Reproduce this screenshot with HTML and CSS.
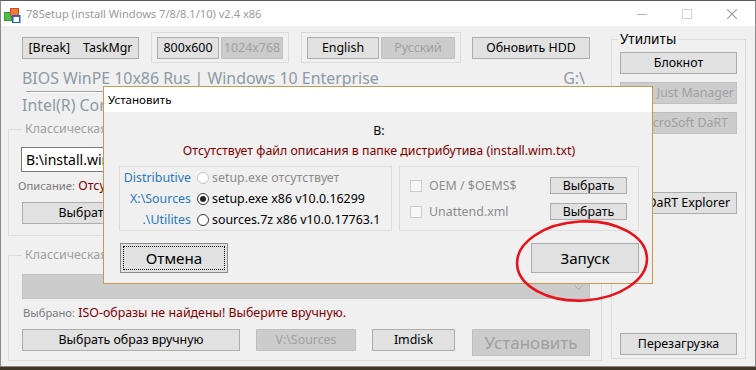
FILE: index.html
```html
<!DOCTYPE html>
<html lang="ru">
<head>
  <meta charset="UTF-8">
  <title>78Setup</title>
  <link rel="stylesheet" href="styles.css">
</head>
<body>
<div class="window">
  <div class="titlebar">
    <svg class="app-icon" viewBox="0 0 18 18" width="18" height="18">
      <rect x="1.5" y="7.5" width="7" height="8" fill="#4cc04c" stroke="#2f9e2f"/>
      <rect x="7.5" y="3.5" width="8" height="8" fill="#f47a3c" stroke="#cf4e12"/>
      <rect x="9.75" y="10.75" width="7" height="7" fill="none" stroke="#1c5fd8" stroke-width="1.5"/>
    </svg>
    <span class="title">78Setup (install Windows 7/8/8.1/10) v2.4 x86</span>
    <div class="controls">
      <span class="ctl"><svg viewBox="0 0 10 10" width="10" height="10"><path d="M0 5.5h10" stroke="#b4b4b4"/></svg></span>
      <span class="ctl"><svg viewBox="0 0 10 10" width="10" height="10"><rect x="0.5" y="0.5" width="9" height="9" fill="none" stroke="#d2d2d2"/></svg></span>
      <span class="ctl"><svg viewBox="0 0 10 10" width="10" height="10"><path d="M0 0L10 10M10 0L0 10" stroke="#9a9a9a" stroke-width="1.1"/></svg></span>
    </div>
  </div>

  <div class="client">
    <div class="main">
      <div class="toolbar">
        <button class="btn break">[Break]&nbsp;&nbsp;&nbsp;&nbsp;TaskMgr</button>
        <div class="frame res">
          <button class="btn w63">800x600</button>
          <button class="btn w63 off">1024x768</button>
        </div>
        <div class="frame lang">
          <button class="btn w72">English</button>
          <button class="btn w74 off">Русский</button>
        </div>
        <button class="btn hdd">Обновить HDD</button>
      </div>

      <div class="info-row">
        <span>BIOS WinPE 10x86 Rus | Windows 10 Enterprise</span>
        <span>G:\</span>
      </div>
      <div class="sep"></div>
      <div class="info-row">
        <span>Intel(R) Core(TM) i5 CPU</span>
      </div>

      <fieldset class="group g1">
        <legend>Классическая установка</legend>
        <div class="path-input">B:\install.wim</div>
        <div class="note"><span class="note-key">Описание:</span> <span class="warn">Отсутствует файл описания</span></div>
        <button class="btn pick">Выбрать образ вручную</button>
      </fieldset>

      <fieldset class="group g2">
        <legend>Классическая установка из ISO</legend>
        <div class="combo"><svg class="chev" viewBox="0 0 9 5" width="9" height="5"><path d="M0.5 0.5L4.5 4.5L8.5 0.5" fill="none" stroke="#a8a8a8"/></svg></div>
        <div class="note sel"><span class="note-key">Выбрано:</span> <span class="warn">ISO-образы не найдены! Выберите вручную.</span></div>
        <div class="actions">
          <button class="btn pick">Выбрать образ вручную</button>
          <button class="btn src off">V:\Sources</button>
          <button class="btn imdisk">Imdisk</button>
          <button class="btn install off">Установить</button>
        </div>
      </fieldset>
    </div>

    <fieldset class="group utils">
      <legend>Утилиты</legend>
      <button class="btn util">Блокнот</button>
      <button class="btn util off right">Just Manager</button>
      <button class="btn util off right r2">MicroSoft DaRT</button>
      <button class="btn util right r3 dart">DaRT Explorer</button>
      <button class="btn util reboot">Перезагрузка</button>
    </fieldset>
  </div>

  <div class="dialog">
    <div class="dlg-title">Установить</div>
    <div class="dlg-body">
      <div class="dlg-line">B:</div>
      <div class="dlg-line warn">Отсутствует файл описания в папке дистрибутива (install.wim.txt)</div>
      <div class="panels">
        <div class="panel sources">
          <div class="src-row">
            <span class="src-label">Distributive</span>
            <span class="radio dis"></span>
            <span class="src-text muted">setup.exe отсутствует</span>
          </div>
          <div class="src-row">
            <span class="src-label">X:\Sources</span>
            <span class="radio on"></span>
            <span class="src-text">setup.exe x86 v10.0.16299</span>
          </div>
          <div class="src-row">
            <span class="src-label">.\Utilites</span>
            <span class="radio"></span>
            <span class="src-text">sources.7z x86 v10.0.17763.1</span>
          </div>
        </div>
        <div class="panel extras">
          <div class="opt-row">
            <span class="check"></span>
            <span class="opt-text">OEM / $OEMS$</span>
            <button class="btn small">Выбрать</button>
          </div>
          <div class="opt-row">
            <span class="check"></span>
            <span class="opt-text">Unattend.xml</span>
            <button class="btn small">Выбрать</button>
          </div>
        </div>
      </div>
      <div class="dlg-buttons">
        <button class="btn big focus">Отмена</button>
        <button class="btn big">Запуск</button>
      </div>
    </div>
  </div>

  <svg class="mark" viewBox="0 0 140 88" width="140" height="88">
    <ellipse cx="70" cy="44" rx="65" ry="39.5" fill="none" stroke="#e8121a" stroke-width="2.6" transform="rotate(-3 70 44)"/>
  </svg>
</div>
</body>
</html>
```

FILE: styles.css
```css
* { box-sizing: border-box; }
body { margin: 0; width: 756px; height: 370px; overflow: hidden; background: #3e3527; font-family: "Noto Sans", sans-serif; font-size: 12.4px; color: #000; }

.window { position: relative; height: 367px; background: #f0f0f0; border: 1px solid #8a8a8a; border-top-color: #5a5a5a; }

.titlebar { height: 25px; background: #fff; display: flex; align-items: center; }
.app-icon { margin-left: 2px; }
.title { margin-left: 5px; color: #9a9a9a; font-size: 11.1px; }
.controls { margin-left: auto; display: flex; margin-right: 1px; }
.ctl { width: 45px; height: 25px; display: flex; align-items: center; justify-content: center; }

.client { display: flex; gap: 9px; padding: 0 9px 0 7px; }
.main { width: 594px; }

.btn { font-family: inherit; font-size: 12.4px; color: #000; background: #e1e1e1; border: 1px solid #adadad; height: 22px; padding: 0; line-height: 18px; white-space: nowrap; overflow: hidden; }
.btn.off { background: #cccccc; border-color: #bfbfbf; color: #a0a0a0; }

.toolbar { display: flex; align-items: center; height: 31px; margin-top: 6px; padding-left: 14px; }
.break { width: 117px; margin-right: 12px; }
.frame { display: flex; align-items: center; gap: 2px; height: 31px; border: 1px solid #dcdcdc; padding: 0 5px; }
.frame.res { width: 138px; margin-right: 12px; }
.frame.lang { width: 160px; margin-right: 11px; }
.w63 { width: 63px; }
.w72 { width: 72px; }
.w74 { width: 74px; }
.hdd { width: 118px; }

.info-row { display: flex; justify-content: space-between; height: 24px; line-height: 24px; padding: 0 17px 0 14px; font-size: 15.9px; color: #8d9aa3; white-space: nowrap; }
.toolbar + .info-row { margin-top: 3px; }
.sep { margin: 1px 12px 0 18px; border-top: 1px solid #a0a0a0; border-bottom: 1px solid #fff; }

.group { margin: 0; border: 1px solid #dcdcdc; padding: 0 0 0 13px; min-width: 0; }
.group legend { margin-left: -13px; padding: 0 3px; line-height: 16px; font-size: 12.4px; color: #a0a0a0; white-space: nowrap; }
.g1 legend, .g2 legend { margin-left: 0; }
.g1 { margin-top: 4px; padding-top: 10px; padding-bottom: 11px; }
.g2 { margin-top: 11px; padding-top: 11px; padding-bottom: 4px; }

.path-input { margin-left: -1px; width: 569px; height: 25px; background: #fff; border: 1px solid #7a7a7a; padding-left: 4px; line-height: 23px; font-size: 14px; }
.note { height: 20px; line-height: 20px; margin-top: 4px; margin-left: -4px; }
.note.sel { margin-left: 1px; }
.note-key { font-size: 11.2px; color: #7a7a7a; }
.warn { color: #800000; }
.pick { width: 218px; margin-top: 6px; }

.combo { position: relative; width: 568px; height: 25px; background: #cccccc; border: 1px solid #c2c2c2; }
.chev { position: absolute; right: 6px; top: 10px; }

.actions { display: flex; align-items: flex-start; margin-top: 6px; }
.actions .pick { margin-top: 0; margin-right: 16px; }
.src { width: 100px; margin-right: 16px; }
.imdisk { width: 83px; margin-right: 17px; }
.install { width: 118px; height: 27px; font-size: 17px; }

.utils { width: 135px; margin-top: 3px; padding: 3px 0 3px 8px; height: 330px; display: flex; flex-direction: column; }
.utils legend { margin-left: -2px; padding: 0 2px; line-height: 20px; font-size: 13.6px; color: #000; }
.util { width: 117px; flex: none; margin-bottom: 8px; }
.util.right { text-align: right; padding-right: 2px; }
.util.r2 { padding-right: 8px; }
.util.r3 { padding-right: 6px; }
.dart { margin-top: 50px; }
.reboot { margin-top: auto; margin-bottom: 0; }

.dialog { position: absolute; left: 102px; top: 85px; width: 550px; height: 198px; background: #f0f0f0; border: 1px solid #c39a4f; }
.dlg-title { height: 25px; background: #fff; line-height: 25px; padding-left: 4px; font-size: 11.6px; }
.dlg-body { padding: 9px 13px 0 15px; }
.dlg-line { text-align: center; height: 20px; line-height: 20px; }
.panels { display: flex; gap: 7px; margin-top: 5px; height: 65px; }
.panel { border: 1px solid #dcdcdc; overflow: hidden; }
.sources { width: 273px; }
.extras { width: 240px; padding: 10px 11px 0 10px; }

.src-row { display: flex; align-items: center; height: 21px; white-space: nowrap; }
.src-label { width: 71px; flex: none; text-align: right; color: #2a78bd; }
.radio { width: 12px; height: 12px; flex: none; margin-left: 6px; border: 1px solid #333; border-radius: 50%; background: #fff; position: relative; }
.radio.dis { border-color: #c6c6c6; }
.radio.on::after { content: ""; position: absolute; left: 2px; top: 2px; width: 6px; height: 6px; border-radius: 50%; background: #222; }
.src-text { margin-left: 3px; }
.muted { color: #8c8c8c; }

.opt-row { display: flex; align-items: center; height: 17px; margin-bottom: 9px; }
.check { width: 12px; height: 12px; flex: none; border: 1px solid #cccccc; background: #f7f7f7; }
.opt-text { margin-left: 7px; color: #8c8c8c; }
.small { margin-left: auto; width: 77px; height: 17px; line-height: 14px; }

.dlg-buttons { display: flex; justify-content: space-between; margin-top: 12px; padding-left: 1px; }
.big { width: 108px; height: 30px; font-size: 15.2px; line-height: 26px; }
.focus { border-color: #8c8c8c; outline: 1px dotted #000; outline-offset: -4px; }

.mark { position: absolute; left: 511px; top: 216px; }
```
